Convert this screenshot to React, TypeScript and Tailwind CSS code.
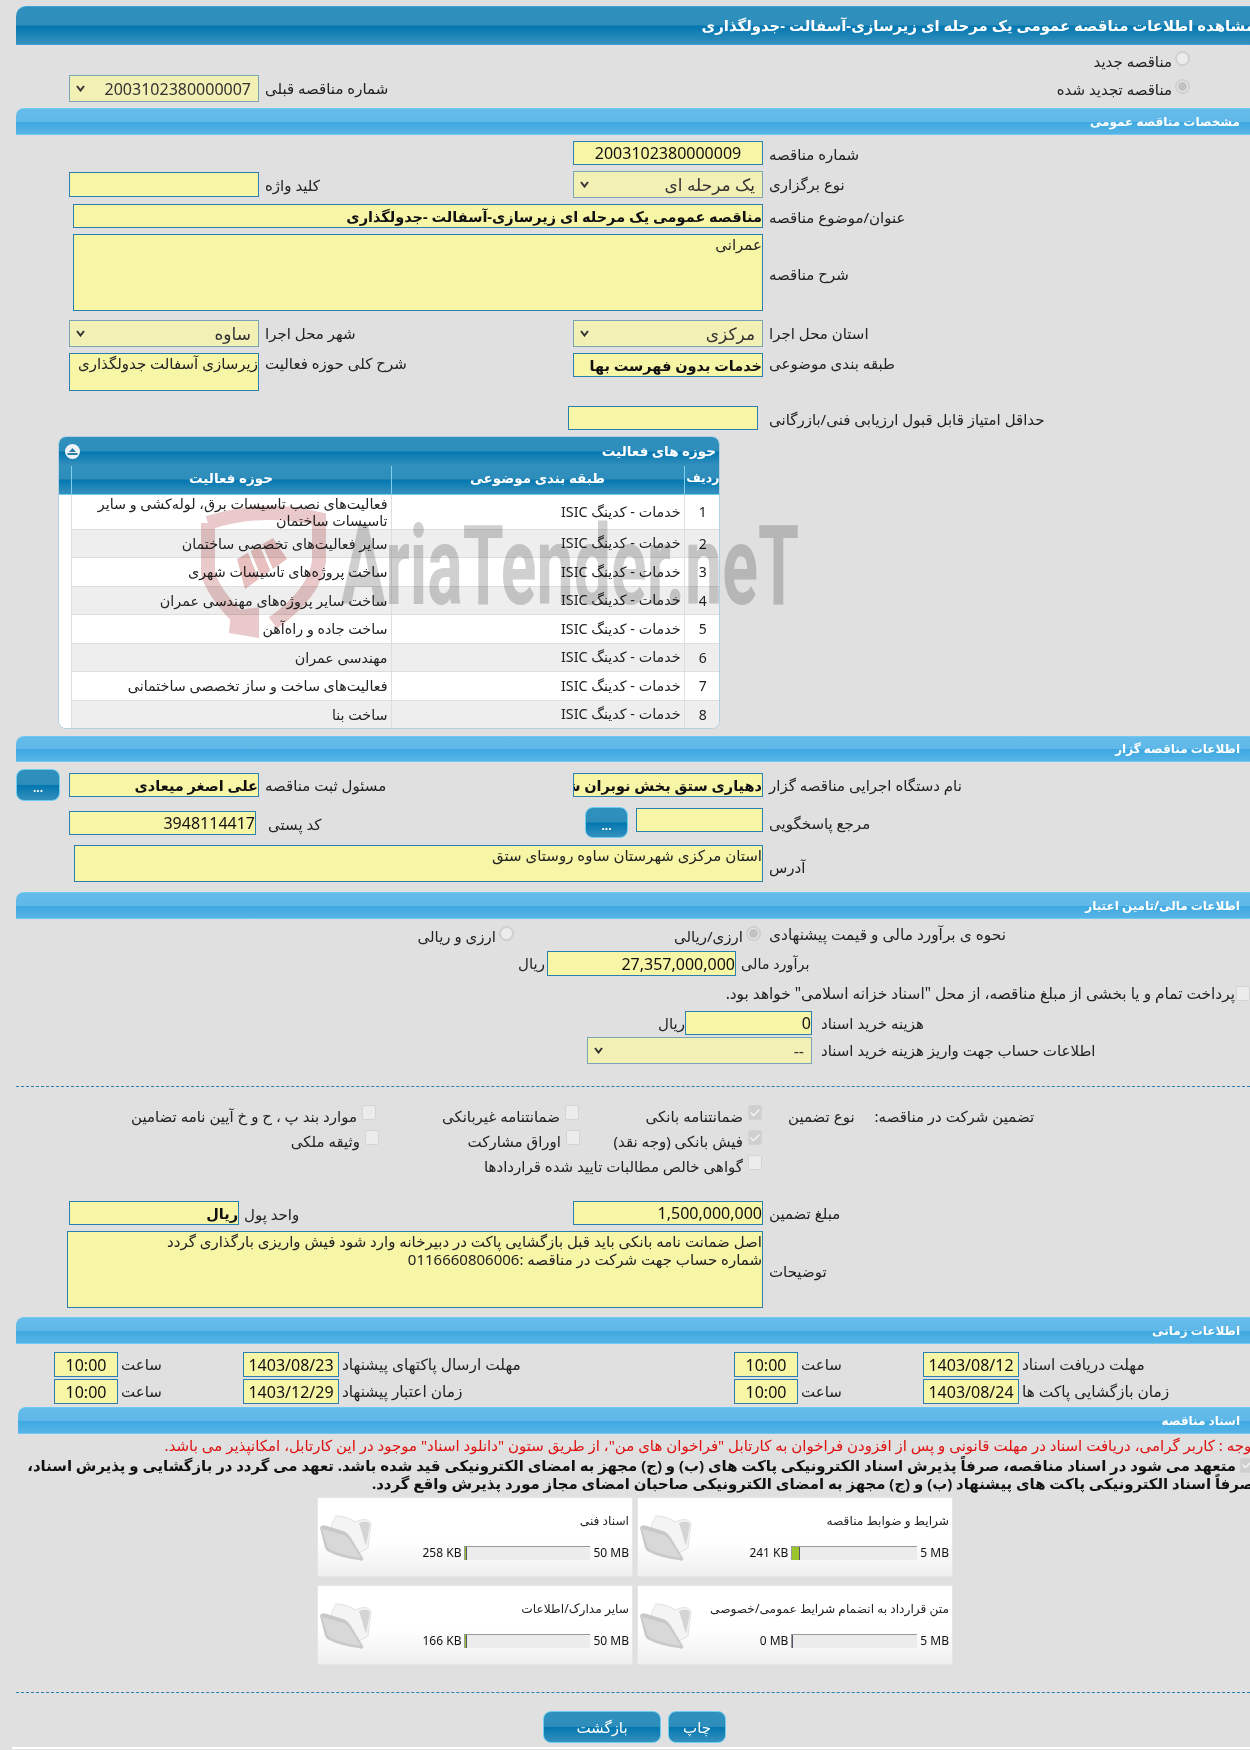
import type { ReactNode } from "react";
import { Check as CheckIcon } from "lucide-react";
import { twMerge } from "tailwind-merge";

const formGrid = "grid grid-cols-[53px_190px_314px_190px_1fr]";
const darkBg = "bg-[linear-gradient(to_bottom,#2f90be_0%,#2e8dbb_48%,#0377b0_52%,#3590bd_100%)]";
const lightBg = "bg-[linear-gradient(to_bottom,#65bcea_0%,#5fb8e8_50%,#3ea9e1_52%,#56b4e6_100%)]";

function Bar({ title, className = "" }: { title: string; className?: string }) {
  return (
    <div
      dir="rtl"
      className={twMerge(
        lightBg,
        "flex h-[27px] items-center rounded-tl-[8px] border-y border-[#6fc8ef] pr-[10px] text-[12px] font-bold text-white",
        className,
      )}
    >
      {title}
    </div>
  );
}

function Label({ children, className = "" }: { children: ReactNode; className?: string }) {
  return (
    <div dir="rtl" className={twMerge("whitespace-nowrap text-left text-[15px] text-[#222]", className)}>
      {children}
    </div>
  );
}

function Field({
  value = "",
  className = "",
  center = false,
  bold = false,
}: {
  value?: string;
  className?: string;
  center?: boolean;
  bold?: boolean;
}) {
  return (
    <input
      readOnly
      dir="rtl"
      value={value}
      className={twMerge(
        "h-[24px] w-[190px] border border-[#2b7eb0] bg-[#f7f5a6] text-[16px] text-[#111] outline-none",
        center && "text-center",
        bold && "text-[14.5px] font-bold",
        className,
      )}
    />
  );
}

function Area({ value = "", className = "" }: { value?: string; className?: string }) {
  return (
    <textarea
      readOnly
      dir="rtl"
      value={value}
      className={twMerge(
        "block resize-none overflow-hidden border border-[#2b7eb0] bg-[#f7f5a6] text-[15px] leading-[18px] text-[#222] outline-none",
        className,
      )}
    />
  );
}

function Sel({ value, className = "", text = "text-[17px]" }: { value: string; className?: string; text?: string }) {
  return (
    <div className={twMerge("relative h-[27px] w-[190px]", className)}>
      <select
        dir="rtl"
        defaultValue={value}
        className={twMerge(
          "h-full w-full appearance-none border border-[#7aa3b5] bg-[#f2f0b4] pl-[20px] pr-[7px] text-[#333]",
          text,
        )}
      >
        <option value={value}>{value}</option>
      </select>
      <svg width="9" height="7" viewBox="0 0 9 7" className="pointer-events-none absolute left-[7px] top-[10px]">
        <path d="M1 1 L4.5 5.5 L8 1" fill="none" stroke="#333" strokeWidth="2" />
      </svg>
    </div>
  );
}

function Radio({ on = false }: { on?: boolean }) {
  return (
    <span className="flex h-[15px] w-[15px] shrink-0 items-center justify-center rounded-full border-2 border-[#cfcfcf] bg-[#ececec]">
      {on && <span className="h-[9px] w-[9px] rounded-full bg-[#c2c2c2]" />}
    </span>
  );
}

function Check({ on = false }: { on?: boolean }) {
  return (
    <span
      className={`flex h-[15px] w-[14px] shrink-0 items-center justify-center rounded-[2px] border border-[#d4d4d4] ${
        on ? "bg-[#cfcfcf]" : "bg-[#ececec]"
      }`}
    >
      {on && <CheckIcon size={12} strokeWidth={3} color="#f4f4f4" />}
    </span>
  );
}

function Opt({ label, on = false, className = "" }: { label: string; on?: boolean; className?: string }) {
  return (
    <div dir="rtl" className={twMerge("flex items-start gap-[5px]", className)}>
      <div className="pt-px">
        <Check on={on} />
      </div>
      <span className="whitespace-nowrap text-[15px] leading-[24px] text-[#222]">{label}</span>
    </div>
  );
}

function SmallBtn({ className = "" }: { className?: string }) {
  return (
    <button
      className={twMerge(
        darkBg,
        "shrink-0 rounded-[8px] border border-[#6fcdf0] pt-[6px] text-[12px] font-bold leading-none text-white",
        className,
      )}
    >
      ...
    </button>
  );
}

function Folder() {
  return (
    <svg width="54" height="48" viewBox="0 0 54 48" className="shrink-0">
      <path d="M12 12 L17 2 Q28 2 36 8 L42 6 Q50 4 52 10 L49 34 L38 40 Z" fill="#f4f4f4" stroke="#e2e2e2" />
      <path d="M40 9 Q48 6 51 10 L47 32 Z" fill="#d4d4d4" />
      <path
        d="M1 14 Q2 10 8 12 L24 17 Q28 18 32 24 L44 44 Q45 48 40 46 Q22 44 10 38 Q6 36 5 30 Z"
        fill="#c9c9c9"
      />
      <path d="M3 15 L24 21 Q28 22 32 28 L42 44 Q26 42 12 36 Q8 34 7 28 Z" fill="#d8d8d8" />
    </svg>
  );
}

function DocCard({
  title,
  size,
  limit,
  fill,
}: {
  title: string;
  size: string;
  limit: string;
  fill: string;
}) {
  return (
    <div className="flex h-[80px] w-[316px] items-start border border-[#e6e6e6] bg-[linear-gradient(to_bottom,#ffffff_55%,#efefef_100%)] pl-px pr-[3px]">
      <div className="pt-[16px]">
        <Folder />
      </div>
      <div className="flex-1">
        <div dir="rtl" className="pt-[14px] text-[12.2px] leading-[18px] text-[#222]">
          {title}
        </div>
        <div className="mt-[16px] flex items-center justify-end gap-[3px] text-[12px] leading-[14px] text-[#111]">
          <span>{size}</span>
          <span className="flex h-[14px] w-[126px] border-l border-t border-[#999] bg-[#ececec]">
            <span className={`h-full border-r border-[#556] bg-[#99c42c] ${fill}`} />
          </span>
          <span>{limit}</span>
        </div>
      </div>
    </div>
  );
}

const rows = [
  ["فعالیت‌های نصب تاسیسات برق، لوله‌کشی و سایر تاسیسات ساختمان", "h-[35px]"],
  ["سایر فعالیت‌های تخصصی ساختمان", "h-[28px]"],
  ["ساخت پروژه‌های تاسیسات شهری", "h-[29px]"],
  ["ساخت سایر پروژه‌های مهندسی عمران", "h-[28px]"],
  ["ساخت جاده و راه‌آهن", "h-[29px]"],
  ["مهندسی عمران", "h-[28px]"],
  ["فعالیت‌های ساخت و ساز تخصصی ساختمانی", "h-[29px]"],
  ["ساخت بنا", "h-[28px]"],
];

function Watermark() {
  return (
    <svg
      width="610"
      height="145"
      viewBox="0 0 610 145"
      className="pointer-events-none absolute left-[142px] top-[64px] mix-blend-multiply"
    >
      <g fill="none" stroke="#e9c9c9" strokeWidth="14">
        <path d="M7 22 Q60 4 118 18 L118 60 Q114 92 72 122" />
        <path d="M7 22 L7 72 Q12 92 42 122" />
      </g>
      <path d="M30 110 L58 106 L58 137 L28 132 Z" fill="#e9c9c9" />
      <path d="M36 58 L72 37 L86 58 L44 88 Z" fill="#e8c0c0" />
      <path d="M48 50 L60 80 M60 44 L72 72" stroke="#ffffff" strokeWidth="3" />
      <text
        x="140"
        y="103"
        fontSize="112"
        fontWeight="700"
        textLength="458"
        lengthAdjust="spacingAndGlyphs"
        fill="#d0d0d0"
        fontFamily="Roboto, sans-serif"
      >
        AriaTender.neT
      </text>
    </svg>
  );
}

function ActivityTable() {
  return (
    <div className="relative ml-[42px] mt-[6px] h-[293px] w-[662px] rounded-[8px] border border-[#b3cfe2] bg-white">
      <div className="h-full overflow-hidden rounded-[7px]">
        <div
          dir="rtl"
          className={twMerge(
            darkBg,
            "flex h-[29px] items-center justify-between px-[3px] text-[13.5px] font-bold text-white",
          )}
        >
          <span>حوزه های فعالیت</span>
          <span className="ml-[3px] flex h-[15px] w-[15px] items-center justify-center rounded-full bg-[#eef3f7]">
            <svg width="11" height="7" viewBox="0 0 11 7">
              <path d="M5.5 0 L9 4 H2 Z M0.5 5 H10.5 V7 H0.5 Z" fill="#2e7fa8" />
            </svg>
          </span>
        </div>
        <table dir="rtl" className="w-full table-fixed border-collapse text-[14.3px] text-[#222]">
          <colgroup>
            <col className="w-[37px]" />
            <col className="w-[293px]" />
            <col className="w-[320px]" />
            <col className="w-[12px]" />
          </colgroup>
          <thead>
            <tr className={`${darkBg} h-[28px] border-b border-[#6fcdf0] font-bold text-white`}>
              <th className="border-l border-[#7fd0ee] pb-[3px] text-[12.5px]">ردیف</th>
              <th className="border-l border-[#7fd0ee] pb-[3px] text-[13.5px]">طبقه بندی موضوعی</th>
              <th className="border-l border-[#7fd0ee] pb-[3px] text-[13.5px]">حوزه فعالیت</th>
              <th />
            </tr>
          </thead>
          <tbody>
            {rows.map(([activity, height], i) => (
              <tr key={activity} className={height}>
                <td
                  className={`border-b border-l border-[#dedede] text-center text-[14px] ${
                    i % 2 ? "bg-[#eeeeee]" : "bg-white"
                  }`}
                >
                  {i + 1}
                </td>
                <td
                  className={`border-b border-l border-[#dedede] pr-[3px] ${i % 2 ? "bg-[#eeeeee]" : "bg-white"}`}
                >
                  خدمات - کدینگ ISIC
                </td>
                <td
                  className={`border-b border-l border-[#dedede] pr-[3px] leading-[17px] ${
                    i % 2 ? "bg-[#eeeeee]" : "bg-white"
                  }`}
                >
                  {activity}
                </td>
                <td className="bg-white" />
              </tr>
            ))}
          </tbody>
        </table>
      </div>
      <Watermark />
    </div>
  );
}

export default function App() {
  return (
    <div className="h-[1750px] w-[1250px] overflow-hidden bg-[#e0e0e0] pl-4 pt-[6px] [font-family:'Noto_Sans','DejaVu_Sans',sans-serif]">
      {/* Page title */}
      <div
        dir="rtl"
        className={`${darkBg} flex h-[39px] items-center overflow-hidden rounded-tl-[10px] border-y border-[#3f9fdc] text-[14.9px] font-bold text-white`}
      >
        <span className="-mr-[5px] whitespace-nowrap">مشاهده اطلاعات مناقصه عمومی یک مرحله ای زیرسازی-آسفالت -جدولگذاری</span>
      </div>

      <div dir="rtl" className="flex h-[30px] items-start gap-[3px] pr-[60px] pt-[6px]">
        <Radio />
        <Label className="leading-[20px]">مناقصه جدید</Label>
      </div>
      <div className={`${formGrid} h-[27px]`}>
        <Sel value="2003102380000007" text="text-[16px]" className="col-start-2" />
        <Label className="col-start-3 pl-[6px] leading-[27px]">شماره مناقصه قبلی</Label>
        <div dir="rtl" className="col-start-5 flex items-start gap-[3px] pr-[60px] pt-[4px]">
          <Radio on />
          <Label className="leading-[20px]">مناقصه تجدید شده</Label>
        </div>
      </div>

      <Bar title="مشخصات مناقصه عمومی" className="mt-[6px]" />

      <div className={`${formGrid} mt-[6px] h-[24px]`}>
        <Field value="2003102380000009" center className="col-start-4" />
        <Label className="pl-[6px] leading-[26px]">شماره مناقصه</Label>
      </div>
      <div className={`${formGrid} mt-[6px] h-[27px]`}>
        <Field className="col-start-2 mt-px h-[25px]" />
        <Label className="pl-[6px] leading-[29px]">کلید واژه</Label>
        <Sel value="یک مرحله ای" />
        <Label className="pl-[6px] leading-[27px]">نوع برگزاری</Label>
      </div>
      <div className={`${formGrid} mt-[6px] h-[24px]`}>
        <Field
          bold
          value="مناقصه عمومی یک مرحله ای زیرسازی-آسفالت -جدولگذاری"
          className="col-span-3 col-start-2 ml-[4px] w-[690px]"
        />
        <Label className="pl-[6px] leading-[26px]">عنوان/موضوع مناقصه</Label>
      </div>
      <div className={`${formGrid} mt-[6px] h-[77px]`}>
        <Area value="عمرانی" className="col-span-3 col-start-2 ml-[4px] h-[77px] w-[690px]" />
        <Label className="self-center pl-[6px] pt-[3px]">شرح مناقصه</Label>
      </div>
      <div className={`${formGrid} mt-[9px] h-[27px]`}>
        <Sel value="ساوه" className="col-start-2" />
        <Label className="pl-[6px] leading-[27px]">شهر محل اجرا</Label>
        <Sel value="مرکزی" />
        <Label className="pl-[6px] leading-[27px]">استان محل اجرا</Label>
      </div>
      <div className={`${formGrid} mt-[6px] h-[38px]`}>
        <Area value="زیرسازی آسفالت جدولگذاری" className="col-start-2 h-[38px] w-[190px]" />
        <Label className="pl-[6px] leading-[20px]">شرح کلی حوزه فعالیت</Label>
        <Field bold value="خدمات بدون فهرست بها" />
        <Label className="pl-[6px] leading-[20px]">طبقه بندی موضوعی</Label>
      </div>
      <div className={`${formGrid} mt-[15px] h-[24px]`}>
        <Field className="col-start-4 -ml-[5px]" />
        <Label className="pl-[6px] leading-[26px]">حداقل امتیاز قابل قبول ارزیابی فنی/بازرگانی</Label>
      </div>

      <ActivityTable />

      <Bar title="اطلاعات مناقصه گزار" className="mt-[7px] h-[26px]" />

      <div className={`${formGrid} mt-[7px] h-[32px] items-center`}>
        <SmallBtn className="h-[32px] w-[44px]" />
        <Field bold value="علی اصغر میعادی" />
        <Label className="pl-[6px]">مسئول ثبت مناقصه</Label>
        <Field bold value="دهیاری ستق بخش نوبران شهرستان ساوه" />
        <Label className="pl-[6px]">نام دستگاه اجرایی مناقصه گزار</Label>
      </div>
      <div className={`${formGrid} mt-[6px] h-[31px]`}>
        <Field value="3948114417" className="col-start-2 mt-[4px] w-[187px]" />
        <Label className="pl-[9px] pt-[5px] leading-[24px]">کد پستی</Label>
        <div className="flex justify-end gap-[8px]">
          <SmallBtn className="h-[31px] w-[43px]" />
          <Field className="mt-px w-[127px]" />
        </div>
        <Label className="pl-[6px] pt-[4px] leading-[24px]">مرجع پاسخگویی</Label>
      </div>
      <div className={`${formGrid} mt-[7px] h-[37px]`}>
        <Area
          value="استان مرکزی شهرستان ساوه روستای ستق"
          className="col-span-3 col-start-2 ml-[5px] h-[37px] w-[689px]"
        />
        <Label className="self-center pl-[6px] pt-[8px]">آدرس</Label>
      </div>

      <Bar title="اطلاعات مالی/تامین اعتبار" className="mt-[10px]" />

      <div className={`${formGrid} mt-[6px] h-[25px]`}>
        <div dir="rtl" className="col-start-3 flex items-start gap-[3px] pr-[59px] pt-px">
          <Radio />
          <Label className="leading-[20px]">ارزی و ریالی</Label>
        </div>
        <div dir="rtl" className="flex items-start gap-[3px] pr-[2px] pt-px">
          <Radio on />
          <Label className="leading-[20px]">ارزی/ریالی</Label>
        </div>
        <Label className="pl-[6px] text-[15.4px] leading-[20px]">نحوه ی برآورد مالی و قیمت پیشنهادی</Label>
      </div>
      <div className="mt-px flex h-[25px] items-center pl-[502px]">
        <Label className="w-[29px]">ریال</Label>
        <Field value="27,357,000,000" className="h-[25px] w-[189px]" />
        <Label className="pl-[5px] text-[14.4px]">برآورد مالی</Label>
      </div>
      <div dir="rtl" className="mt-[8px] flex h-[19px] items-center gap-px">
        <Check />
        <span className="whitespace-nowrap pt-px text-[15.4px] text-[#222]">
          پرداخت تمام و یا بخشی از مبلغ مناقصه، از محل "اسناد خزانه اسلامی" خواهد بود.
        </span>
      </div>
      <div className="mt-[8px] flex h-[24px] items-center pl-[646px]">
        <Label className="w-[23px]">ریال</Label>
        <Field value="0" className="w-[127px]" />
        <Label className="pl-[9px]">هزینه خرید اسناد</Label>
      </div>
      <div className="mt-[2px] flex h-[27px] items-center pl-[571px]">
        <Sel value="--" text="text-[16px]" className="w-[225px]" />
        <Label className="pl-[9px]">اطلاعات حساب جهت واریز هزینه خرید اسناد</Label>
      </div>

      <div className="mt-[22px] border-t border-dashed border-[#2b7eb0]" />

      {/* Guarantee types */}
      <div className="mt-[17px] grid grid-cols-[364px_202px_181px_1fr] grid-rows-[25px_25px_25px]">
        <Opt label="موارد بند پ ، ح و خ آیین نامه تضامین" className="pr-[4px]" />
        <Opt label="ضمانتنامه غیربانکی" className="pr-[3px]" />
        <Opt label="ضمانتنامه بانکی" on className="pr-[1px]" />
        <div className="flex gap-[20px] pl-[25px]">
          <Label className="leading-[24px]">نوع تضمین</Label>
          <Label className="leading-[24px]">تضمین شرکت در مناقصه:</Label>
        </div>
        <Opt label="وثیقه ملکی" className="pr-[1px]" />
        <Opt label="اوراق مشارکت" className="pr-[2px]" />
        <Opt label="فیش بانکی (وجه نقد)" on className="pr-[1px]" />
        <div />
        <Opt label="گواهی خالص مطالبات تایید شده قراردادها" className="col-start-3 -ml-[120px] pr-[1px]" />
      </div>

      <div className={`${formGrid} mt-[22px] h-[24px]`}>
        <div className="col-span-2 col-start-2 flex">
          <Field bold value="ریال" className="w-[170px]" />
          <Label className="pl-[5px] leading-[26px]">واحد پول</Label>
        </div>
        <Field value="1,500,000,000" />
        <Label className="pl-[6px] leading-[24px]">مبلغ تضمین</Label>
      </div>
      <div className={`${formGrid} mt-[6px] h-[77px]`}>
        <Area
          value={"اصل ضمانت نامه بانکی باید قبل بازگشایی پاکت در دبیرخانه وارد شود فیش واریزی بارگذاری گردد\nشماره حساب جهت شرکت در مناقصه :0116660806006"}
          className="col-span-3 col-start-2 -ml-[2px] h-[77px] w-[696px]"
        />
        <Label className="self-center pl-[6px] pt-[3px]">توضیحات</Label>
      </div>

      <Bar title="اطلاعات زمانی" className="mt-[9px]" />

      <div className="ml-[38px] mt-[8px] grid grid-cols-[189px_491px_189px_1fr] gap-y-[2px]">
        {[
          ["10:00", "1403/08/23", "مهلت ارسال پاکتهای پیشنهاد", "10:00", "1403/08/12", "مهلت دریافت اسناد"],
          ["10:00", "1403/12/29", "زمان اعتبار پیشنهاد", "10:00", "1403/08/24", "زمان بازگشایی پاکت ها"],
        ].map((r) => (
          <div key={r[2]} className="col-span-4 grid grid-cols-subgrid">
            <div className="flex">
              <Field value={r[0]} center className="h-[25px] w-[64px]" />
              <Label className="pl-[3px] leading-[25px]">ساعت</Label>
            </div>
            <div className="flex">
              <Field value={r[1]} center className="h-[25px] w-[96px]" />
              <Label className="pl-[3px] text-[15.4px] leading-[25px]">{r[2]}</Label>
            </div>
            <div className="flex">
              <Field value={r[3]} center className="h-[25px] w-[64px]" />
              <Label className="pl-[3px] leading-[25px]">ساعت</Label>
            </div>
            <div className="flex">
              <Field value={r[4]} center className="h-[25px] w-[96px]" />
              <Label className="pl-[3px] text-[15.4px] leading-[25px]">{r[5]}</Label>
            </div>
          </div>
        ))}
      </div>

      <Bar title="اسناد مناقصه" className="ml-[2px] mt-[3px]" />

      {/* Notice */}
      <div dir="rtl" className="-mr-[6px] h-[22px] whitespace-nowrap text-[15px] leading-[23px] text-[#e01010]">
        توجه : کاربر گرامی، دریافت اسناد در مهلت قانونی و پس از افزودن فراخوان به کارتابل "فراخوان های من"، از طریق ستون "دانلود اسناد" موجود در این کارتابل، امکانپذیر می باشد.
      </div>
      <div dir="rtl" className="-mr-[4px] whitespace-nowrap text-[14.9px] font-bold leading-[18px] text-[#111]">
        <div className="flex items-center gap-[4px]">
          <Check on />
          <span>متعهد می شود در اسناد مناقصه، صرفاً پذیرش اسناد الکترونیکی پاکت های (ب) و (ج) مجهز به امضای الکترونیکی قید شده باشد. تعهد می گردد در بازگشایی و پذیرش اسناد،</span>
        </div>
        <div>صرفاً اسناد الکترونیکی پاکت های پیشنهاد (ب) و (ج) مجهز به امضای الکترونیکی صاحبان امضای مجاز مورد پذیرش واقع گردد.</div>
      </div>

      <div className="ml-[301px] mt-[5px] grid w-[636px] grid-cols-2 gap-x-[4px] gap-y-[8px]">
        <DocCard title="اسناد فنی" size="258 KB" limit="50 MB" fill="w-[2px]" />
        <DocCard title="شرایط و ضوابط مناقصه" size="241 KB" limit="5 MB" fill="w-[8px]" />
        <DocCard title="سایر مدارک/اطلاعات" size="166 KB" limit="50 MB" fill="w-[2px]" />
        <DocCard title="متن قرارداد به انضمام شرایط عمومی/خصوصی" size="0 MB" limit="5 MB" fill="w-0" />
      </div>

      <div className="mt-[27px] border-t border-dashed border-[#2b7eb0]" />

      <div className="ml-[527px] mt-[18px] flex gap-[7px]">
        <button className={`${darkBg} h-[32px] w-[118px] rounded-[8px] border border-[#6fcdf0] text-[15px] text-white`}>
          بازگشت
        </button>
        <button className={`${darkBg} h-[32px] w-[58px] rounded-[8px] border border-[#6fcdf0] text-[15px] text-white`}>
          چاپ
        </button>
      </div>
      <div className="-ml-[4px] mt-[4px] h-[2px] bg-white" />
    </div>
  );
}
